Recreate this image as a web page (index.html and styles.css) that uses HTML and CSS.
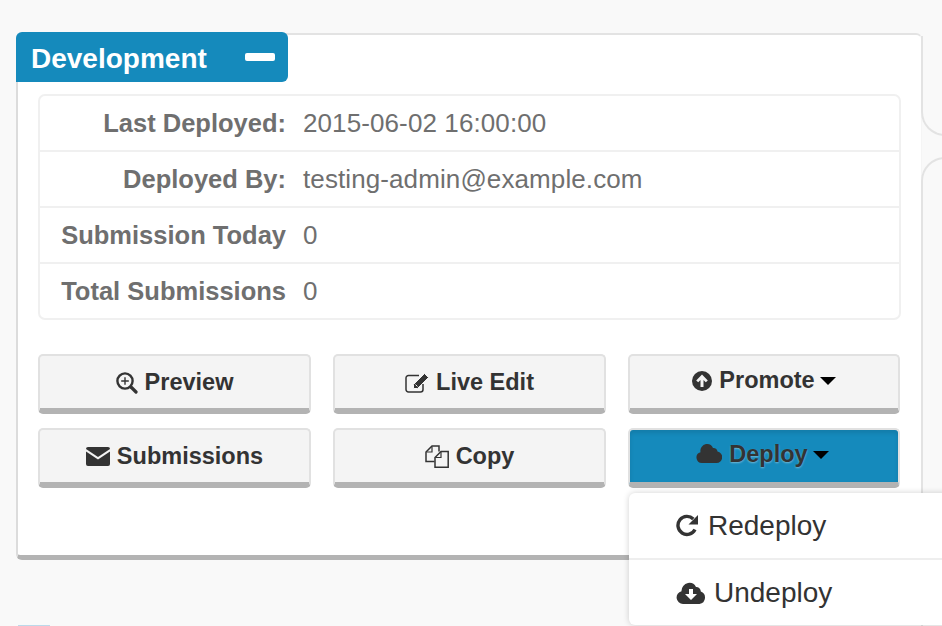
FILE: index.html
```html
<!DOCTYPE html>
<html>
  <head>
    <meta charset="utf-8">
    <title>Development</title>
    <link rel="stylesheet" href="styles.css">
  </head>
  <body>
    <div class="page">
      <div class="main">
        <div class="panel">
          <div class="panel-title">
            <span class="title-text">Development</span>
            <span class="collapse"></span>
          </div>
          <div class="details">
            <div class="row"><div class="label">Last Deployed:</div><div class="value">2015-06-02 16:00:00</div></div>
            <div class="row"><div class="label">Deployed By:</div><div class="value">testing-admin@example.com</div></div>
            <div class="row"><div class="label">Submission Today</div><div class="value">0</div></div>
            <div class="row"><div class="label">Total Submissions</div><div class="value">0</div></div>
          </div>
          <div class="actions">
            <div class="btn">
              <svg class="ico" width="22" height="22" viewBox="0 0 22 22"><circle cx="9" cy="9" r="7.600" fill="none" stroke="#333" stroke-width="2.400"/><path d="M15 15l5 5" stroke="#333" stroke-width="3.200" stroke-linecap="round"/><path d="M9 5.200v7.600M5.200 9h7.600" stroke="#333" stroke-width="1.400"/></svg>
              <span>Preview</span>
            </div>
            <div class="btn">
              <svg class="ico" width="24" height="20" viewBox="0 0 24 20"><path d="M18 11v5.500a2.500 2.500 0 0 1-2.500 2.500H3.500A2.500 2.500 0 0 1 1 16.500V5a2.500 2.500 0 0 1 2.500-2.500H14" fill="none" stroke="#333" stroke-width="1.500"/><path d="M8.500 11.500L19.500 .5l4 4L12.500 15.500H8.500z" fill="#333" stroke="#f4f4f4"/><path d="M10.500 11.500l2 2" stroke="#f4f4f4"/></svg>
              <span>Live Edit</span>
            </div>
            <div class="btn btn-up">
              <svg class="ico" width="20" height="20" viewBox="0 0 20 20"><circle cx="10" cy="10" r="10" fill="#333"/><path d="M10 3.500L15.800 9.500 13.800 11.300 11.500 9V16H8.500V9L6.200 11.300 4.200 9.500z" fill="#f4f4f4"/></svg>
              <span>Promote</span>
              <span class="caret"></span>
            </div>
            <div class="btn">
              <svg class="ico" width="24" height="19" viewBox="0 0 24 19"><path d="M2 0h20a2 2 0 0 1 2 2L12 10 0 2a2 2 0 0 1 2-2z" fill="#333"/><path d="M0 4.500v12.500a2 2 0 0 0 2 2h20a2 2 0 0 0 2-2V4.500L12 12.500z" fill="#333"/></svg>
              <span>Submissions</span>
            </div>
            <div class="btn">
              <svg class="ico" width="24" height="23" viewBox="0 0 24 23"><path d="M9.500 16.500H1V7l6-6h7v5.500" fill="none" stroke="#333" stroke-width="1.500"/><path d="M7 1.500V7H1.500" fill="none" stroke="#333" stroke-width="1.200"/><path d="M10 22.200V12.500l6-6h7.200v15.700z" fill="none" stroke="#333" stroke-width="1.500"/><path d="M16 7V12.500H10.500" fill="none" stroke="#333" stroke-width="1.200"/></svg>
              <span>Copy</span>
            </div>
            <div class="btn btn-active btn-up">
              <svg class="ico cloud" width="26" height="20" viewBox="0 0 26 20"><path d="M6 20a5.500 5.500 0 0 1-1.500-10.800A7 7 0 0 1 10 1a6.500 6.500 0 0 1 7 4 4 4 0 0 1 4.500 3.500A5.800 5.800 0 0 1 20.500 20z" fill="#333"/></svg>
              <span>Deploy</span>
              <span class="caret"></span>
              <div class="menu">
                <div class="menu-item">
                  <svg class="ico" width="24" height="23" viewBox="0 0 24 23"><path d="M19 15.500A9 9 0 1 1 17.300 5" fill="none" stroke="#333" stroke-width="3.400"/><path d="M22 1v9.500h-9.500z" fill="#333"/></svg>
                  <span>Redeploy</span>
                </div>
                <div class="menu-item">
                  <svg class="ico" width="30" height="22" viewBox="0 0 30 22"><path d="M7 22a6.500 6.500 0 0 1-1.500-12.800A8 8 0 0 1 12 1a7.500 7.500 0 0 1 8 4 4.500 4.500 0 0 1 4.800 4.500A6.500 6.500 0 0 1 23.500 22z" fill="#333"/><path d="M13 7h4v5h4l-6 6-6-6h4z" fill="#fff"/></svg>
                  <span>Undeploy</span>
                </div>
              </div>
            </div>
          </div>
        </div>
        <div class="next-title"></div>
      </div>
      <div class="side">
        <div class="side-card side-top"></div>
        <div class="side-card side-next"></div>
      </div>
    </div>
  </body>
</html>
```

FILE: styles.css
```css
html, body {
  margin: 0;
  background: #f9f9f9;
  color: #333;
  font-family: "Liberation Sans", Arial, sans-serif;
}
.page {
  box-sizing: border-box;
  display: flex;
  align-items: flex-start;
  width: 942px;
  height: 626px;
  padding: 33px 0 0 16px;
  overflow: hidden;
}
.main {
  flex-shrink: 0;
  width: 906px;
}
.panel {
  box-sizing: border-box;
  height: 527px;
  padding: 0 20px;
  background: #fff;
  border: 2px solid #e3e3e3;
  border-left-color: #dcdcdc;
  border-right: 1px solid #f5f5f5;
  border-bottom: 5px solid #b3b3b3;
  border-radius: 6px;
}
.panel-title {
  display: flex;
  justify-content: space-between;
  align-items: center;
  box-sizing: border-box;
  width: 272px;
  height: 50px;
  margin: -3px 0 0 -22px;
  padding: 0 13px 0 15px;
  background: #158abc;
  border-radius: 6px 6px 6px 0;
  color: #fff;
  font-size: 28px;
  font-weight: bold;
}
.title-text {
  padding-top: 4px;
}
.collapse {
  width: 30px;
  height: 8px;
  background: #fff;
  border-radius: 2px;
}
.details {
  margin-top: 12px;
  border: 2px solid #f0f0f0;
  border-radius: 7px;
  color: #6f6f6f;
  font-size: 26px;
}
.row {
  display: flex;
  align-items: center;
  height: 54px;
  border-top: 2px solid #f0f0f0;
}
.row:first-child {
  border-top: 0;
}
.label {
  width: 246px;
  margin-right: 17px;
  text-align: right;
  font-size: 25.5px;
  font-weight: bold;
}
.value {
  letter-spacing: .1px;
}
.actions {
  display: grid;
  grid-template-columns: 273px 273px 272px;
  grid-template-rows: 60px 60px;
  column-gap: 22px;
  row-gap: 14px;
  margin-top: 34px;
}
.btn {
  position: relative;
  box-sizing: border-box;
  display: flex;
  justify-content: center;
  align-items: center;
  gap: 7px;
  padding-top: 1px;
  background: #f4f4f4;
  border: 2px solid #e1e1e1;
  border-bottom: 6px solid #b3b3b3;
  border-radius: 5px;
  font-size: 23.5px;
  font-weight: bold;
}
.btn-up {
  padding-top: 0;
  padding-bottom: 3px;
}
.btn-active {
  background: #158abc;
  box-shadow: inset 0 3px 4px rgba(0,0,0,.1);
  text-shadow: 0 1px 2px rgba(255,255,255,.4);
}
.caret {
  width: 0;
  height: 0;
  margin-left: -2px;
  border-top: 8px solid #000;
  border-left: 8px solid transparent;
  border-right: 8px solid transparent;
}
.ico {
  flex-shrink: 0;
}
.cloud {
  margin: -3px 0 0 -3px;
}
.menu {
  position: absolute;
  left: -1px;
  top: 63px;
  width: 330px;
  background: #fff;
  border-radius: 6px;
  box-shadow: 0 0 6px rgba(0,0,0,.18);
  font-size: 28px;
  font-weight: normal;
  text-shadow: none;
}
.menu-item {
  display: flex;
  align-items: center;
  gap: 8px;
  height: 65px;
  padding-left: 47px;
  border-top: 2px solid #eee;
}
.menu-item:first-child {
  border-top: 0;
}
.side {
  display: flex;
  flex-direction: column;
  gap: 21px;
  margin-left: -1px;
}
.side-card {
  box-sizing: border-box;
  width: 60px;
  background: #f9f9f9;
  border: 2px solid #e3e3e3;
}
.side-top {
  height: 100px;
  margin-top: 3px;
  border-top: 0;
  border-radius: 0 0 0 24px;
}
.side-next {
  height: 470px;
  border-bottom: 0;
  border-radius: 24px 0 0 0;
}
.next-title {
  width: 32px;
  height: 2px;
  margin: 65px 0 0 2px;
  background: #bcd9ea;
}
```
